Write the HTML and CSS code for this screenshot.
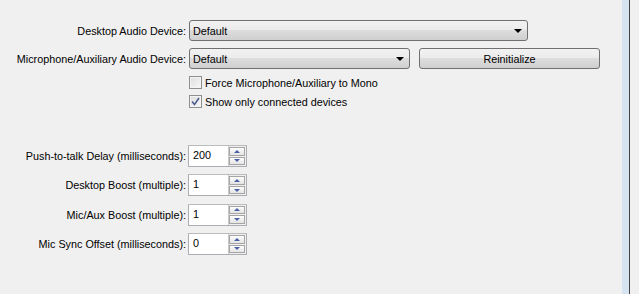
FILE: index.html
```html
<!DOCTYPE html>
<html lang="en">

<head>
    <meta charset="UTF-8">
    <title>Audio Settings</title>
    <link rel="stylesheet" href="styles.css">
</head>

<body>
    <div class="page">
        <div class="panel">
            <div class="form-row row-desktop">
                <label class="label">Desktop Audio Device:</label>
                <div class="combo combo-wide">
                    <span>Default</span>
                    <span class="arrow"></span>
                </div>
            </div>
            <div class="form-row row-mic">
                <label class="label">Microphone/Auxiliary Audio Device:</label>
                <div class="combo combo-mic">
                    <span>Default</span>
                    <span class="arrow"></span>
                </div>
                <button class="push-button">Reinitialize</button>
            </div>
            <div class="form-row row-check first-check">
                <span class="label"></span>
                <div class="check-line">
                    <span class="checkbox"></span>
                    <span>Force Microphone/Auxiliary to Mono</span>
                </div>
            </div>
            <div class="form-row row-check second-check">
                <span class="label"></span>
                <div class="check-line">
                    <span class="checkbox checked">
                        <svg width="9" height="9" viewBox="0 0 9 9">
                            <path d="M1 4.5 L3.5 7.5 L8 1" fill="none" stroke="#4d5f8f" stroke-width="1.6" />
                        </svg>
                    </span>
                    <span>Show only connected devices</span>
                </div>
            </div>

            <div class="spin-section">
                <div class="form-row row-spin">
                    <label class="label">Push-to-talk Delay (milliseconds):</label>
                    <div class="spinbox">
                        <span class="spin-value">200</span>
                        <div class="spin-buttons">
                            <span class="spin-btn up"></span>
                            <span class="spin-btn down"></span>
                        </div>
                    </div>
                </div>
                <div class="form-row row-spin">
                    <label class="label">Desktop Boost (multiple):</label>
                    <div class="spinbox">
                        <span class="spin-value">1</span>
                        <div class="spin-buttons">
                            <span class="spin-btn up"></span>
                            <span class="spin-btn down"></span>
                        </div>
                    </div>
                </div>
                <div class="form-row row-spin">
                    <label class="label">Mic/Aux Boost (multiple):</label>
                    <div class="spinbox">
                        <span class="spin-value">1</span>
                        <div class="spin-buttons">
                            <span class="spin-btn up"></span>
                            <span class="spin-btn down"></span>
                        </div>
                    </div>
                </div>
                <div class="form-row row-spin">
                    <label class="label">Mic Sync Offset (milliseconds):</label>
                    <div class="spinbox">
                        <span class="spin-value">0</span>
                        <div class="spin-buttons">
                            <span class="spin-btn up"></span>
                            <span class="spin-btn down"></span>
                        </div>
                    </div>
                </div>
            </div>
        </div>
        <div class="scroll-strip"></div>
        <div class="edge-line"></div>
        <div class="outside"></div>
    </div>
</body>

</html>
```

FILE: styles.css
```css
body {
    margin: 0;
    font-family: "Liberation Sans", Arial, sans-serif;
    font-size: 10.8px;
    color: #000;
    background-color: #f0f0f0;
    overflow: hidden;
}

.page {
    display: flex;
    height: 294px;
}

.panel {
    flex: 1;
    padding-top: 20px;
}

.scroll-strip {
    width: 7px;
    background-color: #d6e4f1;
}

.edge-line {
    width: 1px;
    background-color: #444;
}

.outside {
    width: 9px;
    background-color: #f0f0f0;
}

.form-row {
    display: flex;
    align-items: center;
}

.label {
    width: 186px;
    flex-shrink: 0;
    text-align: right;
    margin-right: 3px;
    white-space: nowrap;
}

.row-desktop {
    height: 21px;
}

.row-mic {
    height: 21px;
    margin-top: 7px;
}

.row-check {
    height: 13px;
}

.first-check {
    margin-top: 7px;
}

.second-check {
    margin-top: 6px;
}

.combo {
    box-sizing: border-box;
    height: 21px;
    border: 1px solid #707070;
    border-radius: 3px;
    background: linear-gradient(#f2f2f2 0%, #ebebeb 50%, #dddddd 50%, #cfcfcf 100%);
    display: flex;
    align-items: center;
    justify-content: space-between;
    padding: 1px 4px 0 3px;
}

.combo-wide {
    width: 339px;
}

.combo-mic {
    width: 221px;
}

.arrow {
    width: 0;
    height: 0;
    border-left: 4px solid transparent;
    border-right: 4px solid transparent;
    border-top: 4px solid #000;
    margin-right: 1px;
}

.push-button {
    box-sizing: border-box;
    width: 181px;
    height: 21px;
    margin-left: 9px;
    border: 1px solid #707070;
    border-radius: 3px;
    background: linear-gradient(#f2f2f2 0%, #ebebeb 50%, #dddddd 50%, #cfcfcf 100%);
    font-family: inherit;
    font-size: inherit;
    padding: 1px 0 0;
    color: #000;
}

.check-line {
    display: flex;
    align-items: center;
    gap: 3px;
}

.checkbox {
    box-sizing: border-box;
    width: 13px;
    height: 13px;
    border: 1px solid #8e8f8f;
    background: linear-gradient(135deg, #dcdcdc, #f8f8f8);
    box-shadow: inset 0 0 0 1px #f4f4f4;
    display: flex;
    align-items: center;
    justify-content: center;
}

.spin-section {
    margin-top: 37px;
    display: flex;
    flex-direction: column;
    gap: 7px;
}

.row-spin {
    height: 22.3px;
}

.row-spin .label {
    margin-right: 2px;
}

.spinbox {
    box-sizing: border-box;
    width: 59px;
    height: 22px;
    border: 1px solid #abadb3;
    border-top-color: #bcbcbc;
    background-color: #fff;
    display: flex;
    justify-content: space-between;
}

.spin-value {
    padding: 3px 0 0 4px;
}

.spin-buttons {
    display: flex;
    flex-direction: column;
    gap: 1px;
    padding: 1px 1px 1px 0;
    background-color: #f0f0f0;
    border-left: 1px solid #c8c8c8;
}

.spin-btn {
    box-sizing: border-box;
    width: 16px;
    flex: 1;
    border: 1px solid #a5a5a5;
    background: linear-gradient(#fdfdfd, #e4e4e4);
    display: flex;
    align-items: center;
    justify-content: center;
}

.spin-btn::after {
    content: "";
    width: 0;
    height: 0;
    border-left: 3px solid transparent;
    border-right: 3px solid transparent;
}

.spin-btn.up::after {
    border-bottom: 3px solid #4a5fa6;
}

.spin-btn.down::after {
    border-top: 3px solid #4a5fa6;
}
```
